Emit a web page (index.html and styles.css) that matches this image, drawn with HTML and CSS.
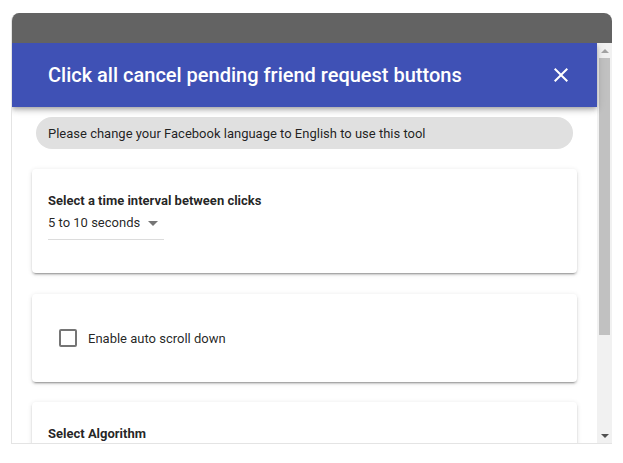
FILE: index.html
```html
<!DOCTYPE html>
<html lang="en">
<head>
<meta charset="utf-8">
<title>Cancel pending friend requests</title>
<link rel="stylesheet" href="styles.css">
</head>
<body>
<div class="frame">
  <div class="topbar"></div>
  <div class="viewport">
    <div class="content">
      <header class="toolbar">
        <h1 class="title">Click all cancel pending friend request buttons</h1>
        <button class="close" aria-label="Close">
          <svg viewBox="0 0 24 24" width="24" height="24"><path d="M19 6.41L17.59 5 12 10.59 6.41 5 5 6.41 10.59 12 5 17.59 6.41 19 12 13.41 17.59 19 19 17.59 13.41 12z" fill="#fff"/></svg>
        </button>
      </header>
      <div class="body">
        <div class="notice">Please change your Facebook language to English to use this tool</div>
        <section class="card card-interval">
          <div class="card-title">Select a time interval between clicks</div>
          <div class="select">
            <span class="select-value">5 to 10 seconds</span>
            <span class="select-arrow"></span>
          </div>
        </section>
        <section class="card card-check">
          <span class="checkbox"></span>
          <span class="check-label">Enable auto scroll down</span>
        </section>
        <section class="card card-algo">
          <div class="card-title">Select Algorithm</div>
        </section>
      </div>
    </div>
    <div class="scrollbar">
      <div class="sb-arrow sb-up"></div>
      <div class="sb-track"><div class="sb-thumb"></div></div>
      <div class="sb-arrow sb-down"></div>
    </div>
  </div>
</div>
</body>
</html>
```
FILE: styles.css
```css
* { box-sizing: border-box; }
html, body { margin: 0; padding: 0; background: #fff; }
body {
  font-family: Roboto, "Liberation Sans", Arial, sans-serif;
  color: rgba(0,0,0,0.87);
}
.frame {
  margin: 13px 0 0 11px;
  width: 601px;
  border-left: 1px solid #e4e4e4;
  border-bottom: 1px solid #e4e4e4;
  border-radius: 8px 8px 0 0;
  overflow: hidden;
}
.topbar {
  height: 30px;
  background: #636363;
}
.viewport {
  display: flex;
  height: 400px;
  overflow: hidden;
}
.content {
  width: 585px;
  flex: none;
  background: #fff;
}
.toolbar {
  position: relative;
  z-index: 1;
  height: 64px;
  background: #3f51b5;
  display: flex;
  align-items: center;
  justify-content: space-between;
  padding: 0 24px 0 36px;
  box-shadow: 0 2px 4px -1px rgba(0,0,0,.2), 0 4px 5px 0 rgba(0,0,0,.14), 0 1px 10px 0 rgba(0,0,0,.12);
}
.title {
  margin: 0;
  font-size: 20px;
  font-weight: 500;
  color: #fff;
  letter-spacing: 0;
}
.close {
  width: 24px;
  height: 24px;
  padding: 0;
  border: 0;
  background: none;
  display: flex;
}
.body {
  padding: 10px 20px 0;
}
.notice {
  margin: 0 4px;
  height: 32px;
  border-radius: 16px;
  background: #e0e0e0;
  padding-left: 12px;
  display: flex;
  align-items: center;
  font-size: 13px;
  color: rgba(0,0,0,0.87);
}
.card {
  background: #fff;
  border-radius: 4px;
  box-shadow: 0 3px 1px -2px rgba(0,0,0,.2), 0 2px 2px 0 rgba(0,0,0,.14), 0 1px 5px 0 rgba(0,0,0,.12);
  margin-top: 20px;
}
.card + .card { margin-top: 21px; }
.card-algo.card { margin-top: 20px; }
.card-interval {
  height: 104px;
  padding: 24px 16px 0;
}
.card-title {
  font-size: 13px;
  font-weight: 700;
  line-height: 16px;
}
.select {
  margin-top: 6px;
  width: 116px;
  display: flex;
  align-items: center;
  padding-bottom: 8px;
  border-bottom: 1px solid #dcdcdc;
  font-size: 13px;
  line-height: 16px;
}
.select-arrow {
  margin-left: 8px;
  width: 0;
  height: 0;
  border-left: 5px solid transparent;
  border-right: 5px solid transparent;
  border-top: 5px solid #757575;
}
.card-check {
  height: 88px;
  display: flex;
  align-items: center;
  padding-left: 27px;
}
.checkbox {
  width: 18px;
  height: 18px;
  border: 2px solid #757575;
  border-radius: 2px;
  flex: none;
}
.check-label {
  margin-left: 11px;
  font-size: 13px;
}
.card-algo {
  height: 120px;
  padding: 24px 16px 0;
}
.scrollbar {
  width: 15px;
  flex: none;
  background: #f1f1f1;
  display: flex;
  flex-direction: column;
}
.sb-arrow {
  height: 15px;
  display: flex;
  align-items: center;
  justify-content: center;
}
.sb-up::before, .sb-down::before {
  content: "";
  width: 0;
  height: 0;
  border-left: 4px solid transparent;
  border-right: 4px solid transparent;
}
.sb-up::before { border-bottom: 4px solid #a3a3a3; }
.sb-down::before { border-top: 4px solid #505050; }
.sb-track {
  flex: 1;
  padding: 0 2px;
}
.sb-thumb {
  height: 277px;
  background: #c1c1c1;
}
```
